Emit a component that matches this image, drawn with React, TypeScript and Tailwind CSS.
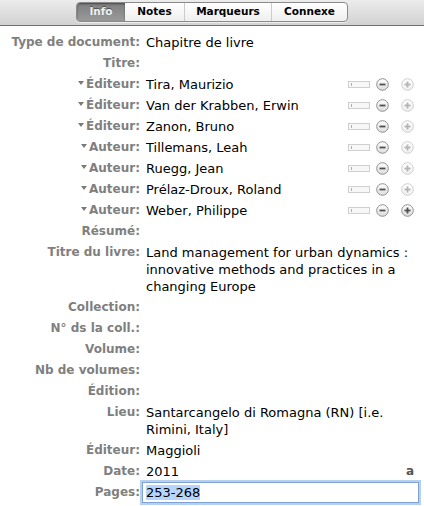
import React from 'react';

type Row =
  | { kind: 'field'; label: string; value?: string; extra?: string; focused?: boolean }
  | { kind: 'creator'; label: string; value: string; last?: boolean };

const rows: Row[] = [
  { kind: 'field', label: 'Type de document', value: 'Chapitre de livre' },
  { kind: 'field', label: 'Titre' },
  { kind: 'creator', label: 'Éditeur', value: 'Tira, Maurizio' },
  { kind: 'creator', label: 'Éditeur', value: 'Van der Krabben, Erwin' },
  { kind: 'creator', label: 'Éditeur', value: 'Zanon, Bruno' },
  { kind: 'creator', label: 'Auteur', value: 'Tillemans, Leah' },
  { kind: 'creator', label: 'Auteur', value: 'Ruegg, Jean' },
  { kind: 'creator', label: 'Auteur', value: 'Prélaz-Droux, Roland' },
  { kind: 'creator', label: 'Auteur', value: 'Weber, Philippe', last: true },
  { kind: 'field', label: 'Résumé' },
  {
    kind: 'field',
    label: 'Titre du livre',
    value: 'Land management for urban dynamics : innovative methods and practices in a changing Europe',
  },
  { kind: 'field', label: 'Collection' },
  { kind: 'field', label: 'N° ds la coll.' },
  { kind: 'field', label: 'Volume' },
  { kind: 'field', label: 'Nb de volumes' },
  { kind: 'field', label: 'Édition' },
  { kind: 'field', label: 'Lieu', value: 'Santarcangelo di Romagna (RN) [i.e. Rimini, Italy]' },
  { kind: 'field', label: 'Éditeur', value: 'Maggioli' },
  { kind: 'field', label: 'Date', value: '2011', extra: 'a' },
  { kind: 'field', label: 'Pages', value: '253-268', focused: true },
];

const tabs = [
  { name: 'Info', w: 'w-[48px]' },
  { name: 'Notes', w: 'w-[59px]' },
  { name: 'Marqueurs', w: 'w-[87px]' },
  { name: 'Connexe', w: 'w-[76px]' },
];

function Twisty() {
  return (
    <svg width="6" height="4" viewBox="0 0 6 4" className="mr-[2px] -mt-[3px] inline-block">
      <polygon points="0,0 6,0 3,4" fill="#7a7a7a" />
    </svg>
  );
}

function RoundButton({ plus, faint }: { plus?: boolean; faint?: boolean }) {
  const ring = faint ? '#cdcdcd' : '#8f8f8f';
  const mark = faint ? '#b4b4b4' : '#505050';
  const id = `g${plus ? 'p' : 'm'}${faint ? 'f' : 'd'}`;
  return (
    <svg width="13" height="13" viewBox="0 0 13 13">
      <defs>
        <linearGradient id={id} x1="0" y1="0" x2="0" y2="1">
          <stop offset="0" stopColor="#ffffff" />
          <stop offset="1" stopColor={faint ? '#f0f0f0' : '#dcdcdc'} />
        </linearGradient>
      </defs>
      <circle cx="6.5" cy="6.5" r="5.8" fill={`url(#${id})`} stroke={ring} strokeWidth="1" />
      <rect x="3.5" y="5.6" width="6" height="1.8" fill={mark} />
      {plus && <rect x="5.6" y="3.5" width="1.8" height="6" fill={mark} />}
    </svg>
  );
}

export default function App() {
  return (
    <div className="w-[424px] h-[506px] overflow-hidden bg-white font-['DejaVu_Sans',sans-serif]">
      <div className="h-[26px] flex items-start justify-center pt-[2px] border-b border-[#6f6f6f] bg-gradient-to-b from-[#ececec] to-[#d2d2d2]">
        <div className="flex h-[20px] rounded-[4px] border border-[#8a8a8a] overflow-hidden bg-gradient-to-b from-white to-[#efefef] shadow-[0_1px_0_rgba(255,255,255,0.6)]">
          {tabs.map((t, i) => (
            <div
              key={t.name}
              className={
                i === 0
                  ? `${t.w} flex items-center justify-center text-[10.5px] font-bold text-[#f2f2f2] bg-gradient-to-b from-[#7e7e7e] to-[#9a9a9a] shadow-[inset_0_1px_2px_rgba(0,0,0,0.45)] [text-shadow:0_-1px_0_rgba(0,0,0,0.45)]`
                  : `${t.w} flex items-center justify-center text-[10.5px] font-bold text-black ${i > 1 ? 'border-l border-[#cbcbcb]' : ''}`
              }
            >
              {t.name}
            </div>
          ))}
        </div>
      </div>

      <div className="pt-[6px]">
        {rows.map((r, i) => (
          <div key={i} className="grid grid-cols-[140px_1fr] py-[2px] leading-[17px]">
            <div className="text-right text-[12px] font-bold text-[#7f7f7f] whitespace-nowrap">
              {r.kind === 'creator' && <Twisty />}
              {r.label}:
            </div>
            {r.kind === 'creator' ? (
              <div className="flex items-center pl-[6px] pr-[10px] text-[13px] text-black">
                <span className="flex-1">{r.value}</span>
                <div className="relative w-[22px] h-[7px] border border-[#cfcfcf] bg-[#f7f7f7] mr-[6px]">
                  <div className="absolute left-[2px] top-[1px] w-px h-[3px] bg-[#b0b0b0]" />
                </div>
                <div className="mr-[12px] flex">
                  <RoundButton />
                </div>
                <div className="flex">
                  <RoundButton plus faint={!r.last} />
                </div>
              </div>
            ) : r.focused ? (
              <div className="pr-[5px] pl-[2px]">
                <div className="-my-[2px] py-[1px] pl-[3px] border border-[#7ea3d2] shadow-[0_0_0_2px_rgba(125,170,225,0.55)] text-[13px] text-black">
                  <span className="bg-[#b5d5ff]">{r.value}</span>
                </div>
              </div>
            ) : (
              <div className="flex pl-[6px] pr-[8px] text-[13px] text-black">
                <span className="flex-1">{r.value ?? ''}</span>
                {r.extra && <span className="text-[12px] font-bold text-[#555] pr-[2px]">{r.extra}</span>}
              </div>
            )}
          </div>
        ))}
      </div>
    </div>
  );
}
